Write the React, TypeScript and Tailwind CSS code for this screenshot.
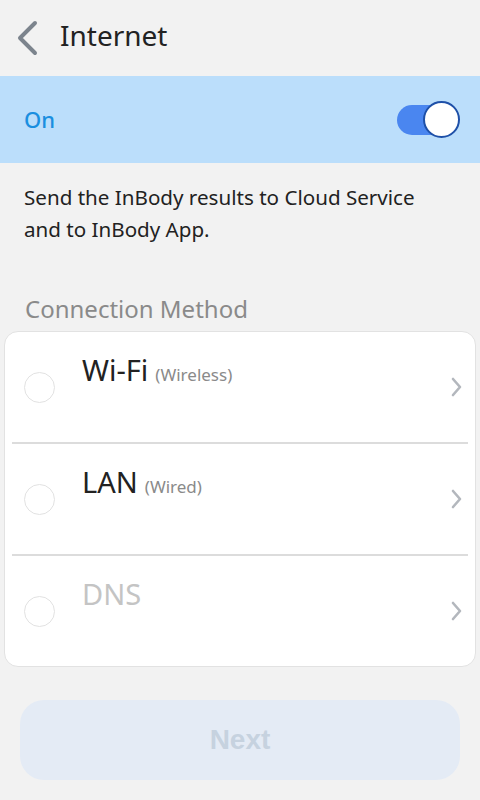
import React from "react";

const font = { fontFamily: '"Noto Sans", "Open Sans", sans-serif' };

function Chevron() {
  return (
    <svg width="12" height="22" viewBox="0 0 12 22" fill="none">
      <path d="M3 3 L10 11 L3 19" stroke="#b3b7bd" strokeWidth="2.6" strokeLinecap="round" strokeLinejoin="round" />
    </svg>
  );
}

function Row({ title, sub, disabled, last }: { title: string; sub?: string; disabled?: boolean; last?: boolean }) {
  return (
    <div className="flex flex-col">
      <div className="flex h-[110px] items-center pl-[19px] pr-[13px]">
        <div className="h-[31px] w-[31px] shrink-0 rounded-full border border-[#e2e2e2]" />
        <div className="ml-[27px] flex flex-1 items-baseline -mt-[36px]">
          <span className={`text-[29px] leading-none ${disabled ? "text-[#c4c4c4]" : "text-[#222222]"}`}>{title}</span>
          {sub && <span className="ml-[7px] text-[17px] leading-none text-[#8a8a8a]">{sub}</span>}
        </div>
        <Chevron />
      </div>
      {!last && <div className="mx-[7px] h-[2px] bg-[#dcdcdc]" />}
    </div>
  );
}

export default function App() {
  return (
    <div className="flex h-[800px] w-[480px] flex-col bg-[#f2f2f2]" style={font}>
      <div className="flex h-[76px] items-center">
        <svg className="ml-[14px]" width="26" height="40" viewBox="0 0 26 40" fill="none">
          <path d="M21 5 L6 20 L21 35" stroke="#7c848d" strokeWidth="4" strokeLinecap="round" strokeLinejoin="round" />
        </svg>
        <span className="ml-[20px] text-[28px] leading-none text-[#222222] -mt-[6px]">Internet</span>
      </div>
      <div className="flex h-[87px] items-center justify-between bg-[#bbdefb] pl-[24px] pr-[20px]">
        <span className="text-[22px] font-medium text-[#1a8fe0]">On</span>
        <div className="flex items-center">
          <div className="h-[30px] w-[44px] rounded-l-full bg-[#4a86f0] -mr-[18px]" />
          <div className="h-[37px] w-[37px] rounded-full border-2 border-[#1e50a8] bg-white" />
        </div>
      </div>
      <p className="mt-[18px] px-[24px] text-[20.6px] leading-[32px] text-[#222222]">
        Send the InBody results to Cloud Service
        <br />
        and to InBody App.
      </p>
      <div className="mt-[52px] pl-[25px] text-[24px] leading-none text-[#8a8a8a]">Connection Method</div>
      <div className="mx-[4px] mt-[10px] flex flex-col rounded-[14px] border border-[#e2e2e2] bg-white">
        <Row title="Wi-Fi" sub="(Wireless)" />
        <Row title="LAN" sub="(Wired)" />
        <Row title="DNS" disabled last />
      </div>
      <div className="mx-[20px] mt-[33px] flex h-[80px] items-center justify-center rounded-[24px] bg-[#e4ebf5]">
        <span className="text-[28px] font-bold text-[#c6d2df]" style={{ fontFamily: '"Liberation Sans", Arial, sans-serif' }}>
          Next
        </span>
      </div>
    </div>
  );
}
